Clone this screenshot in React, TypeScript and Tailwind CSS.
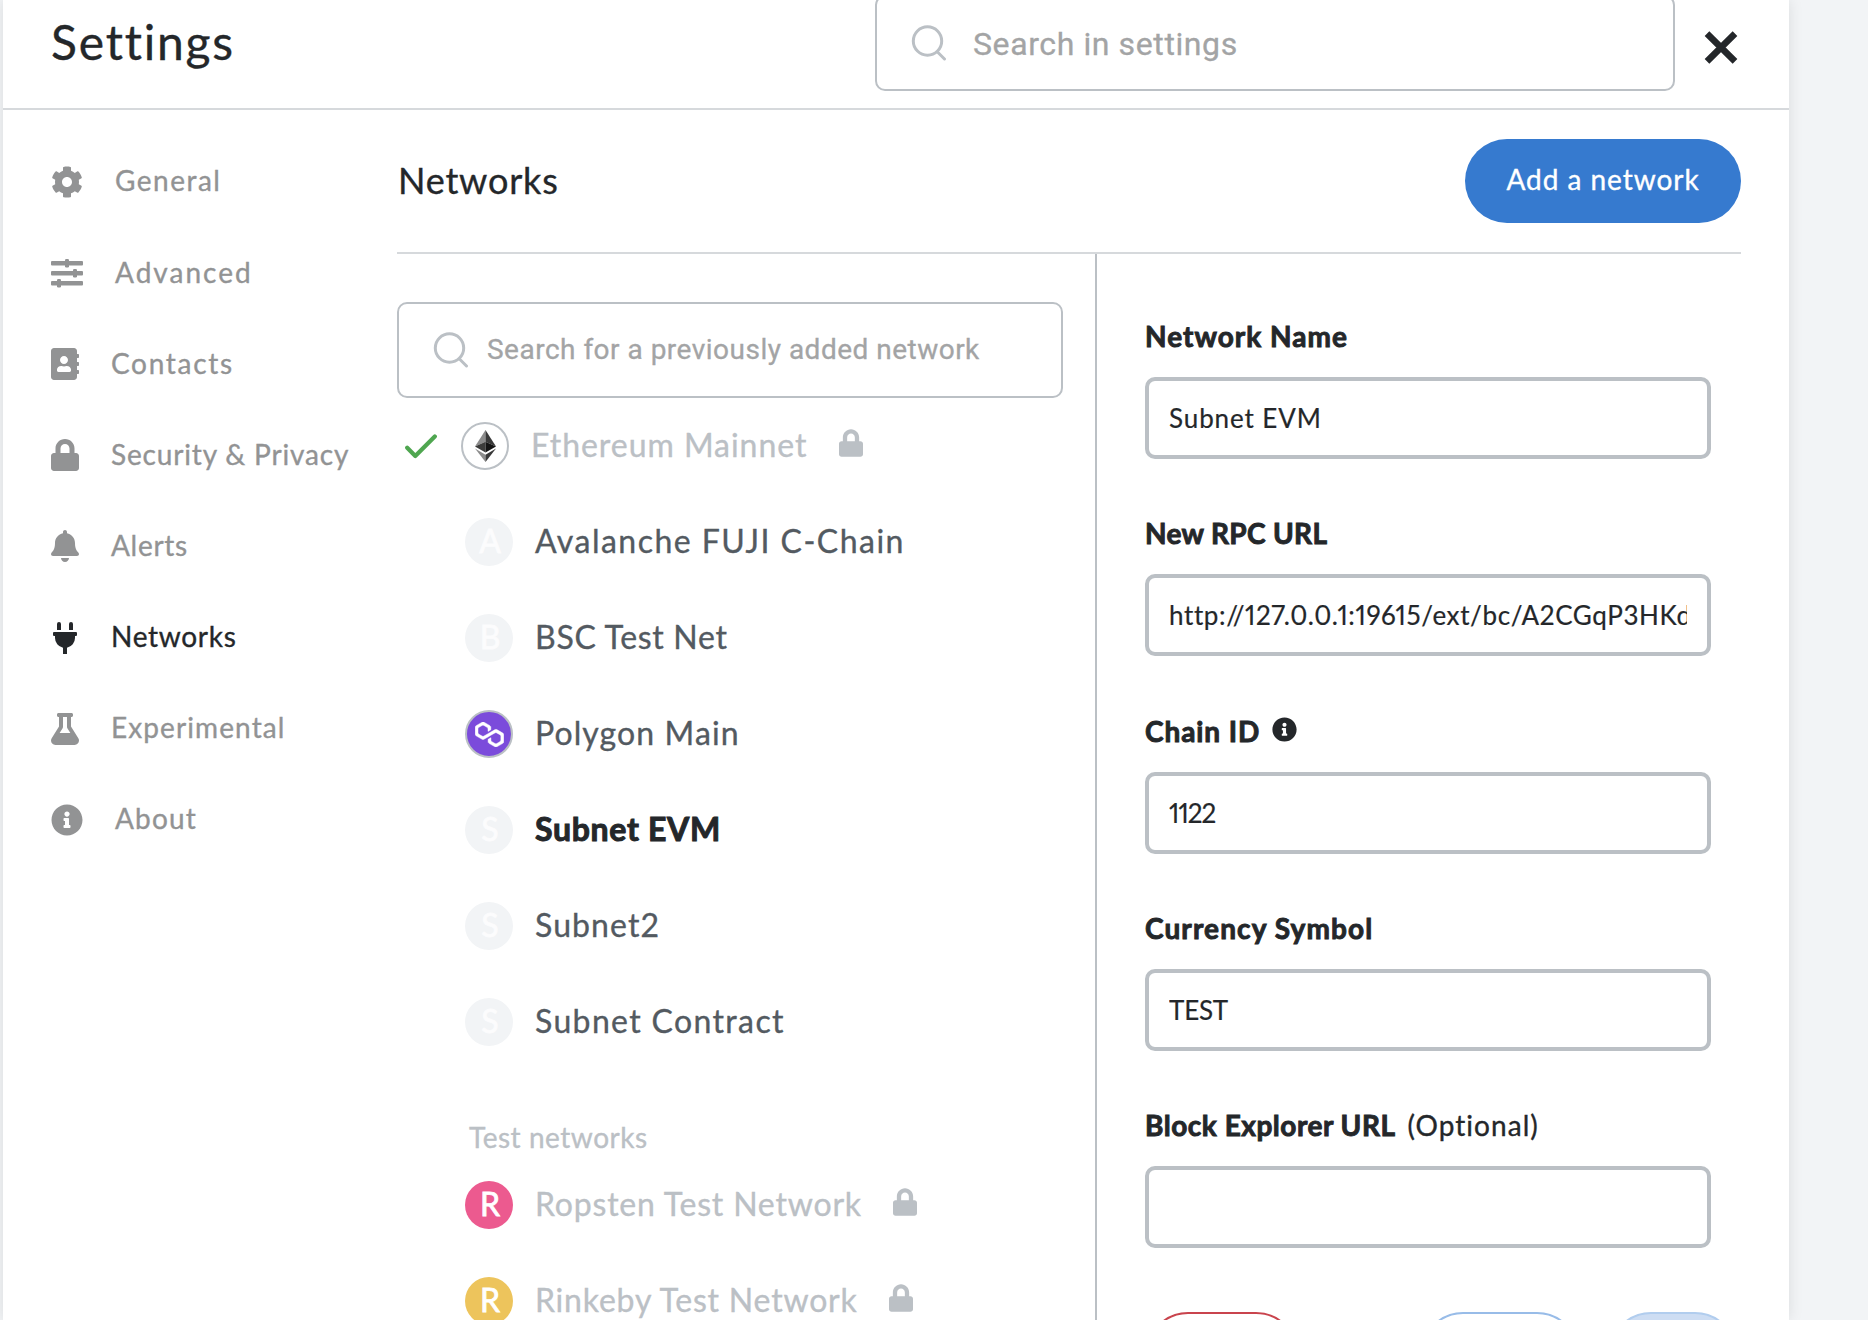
import type { ReactNode } from "react";
import { FaAddressBook, FaBell, FaCog, FaFlask, FaInfoCircle, FaLock, FaPlug } from "react-icons/fa";

function SearchIcon() {
  return (
    <svg className="h-9 w-9 shrink-0" viewBox="0 0 36 36" fill="none" stroke="#bbc0c5" strokeWidth="3">
      <circle cx="16.5" cy="16" r="14.2" />
      <path d="M26.5 27 L33.5 34" strokeLinecap="round" />
    </svg>
  );
}

function SlidersIcon() {
  return (
    <svg className="h-8 w-8" viewBox="0 0 32 32" fill="currentColor">
      <rect y="4" width="32" height="4.4" rx="1" />
      <rect y="14" width="32" height="4.4" rx="1" />
      <rect y="24" width="32" height="4.4" rx="1" />
      <rect x="14" y="2" width="4" height="8.4" rx="1.2" />
      <rect x="22" y="12" width="4" height="8.4" rx="1.2" />
      <rect x="6" y="22" width="4" height="8.4" rx="1.2" />
    </svg>
  );
}

function EthereumIcon() {
  return (
    <svg className="h-8 w-[21px]" viewBox="0 0 21 32">
      <path fill="#8c8c8c" d="M10.5 0 L0 16.5 L10.5 11.8Z" />
      <path fill="#393939" d="M10.5 0 L21 16.5 L10.5 11.8Z" />
      <path fill="#3c3c3b" d="M0 16.5 L10.5 11.8 V22.6Z" />
      <path fill="#141414" d="M21 16.5 L10.5 11.8 V22.6Z" />
      <path fill="#8c8c8c" d="M0 18.6 L10.5 24.7 V32Z" />
      <path fill="#393939" d="M21 18.6 L10.5 24.7 V32Z" />
    </svg>
  );
}

function PolygonIcon() {
  return (
    <svg className="h-[25px] w-[29px]" viewBox="0 0 38.4 33.5" fill="#fff" stroke="#fff" strokeWidth="0.6">
      <path d="M29,10.2c-0.7-0.4-1.6-0.4-2.4,0L21,13.5l-3.8,2.1l-5.5,3.3c-0.7,0.4-1.6,0.4-2.4,0L5,16.3c-0.7-0.4-1.2-1.2-1.2-2.1v-5c0-0.8,0.4-1.6,1.2-2.1l4.3-2.5c0.7-0.4,1.6-0.4,2.4,0L16,7.2c0.7,0.4,1.2,1.2,1.2,2.1v3.3l3.8-2.2V7c0-0.8-0.4-1.6-1.2-2.1l-8-4.7c-0.7-0.4-1.6-0.4-2.4,0L1.2,5C0.4,5.4,0,6.2,0,7v9.4c0,0.8,0.4,1.6,1.2,2.1l8.1,4.7c0.7,0.4,1.6,0.4,2.4,0l5.5-3.2l3.8-2.2l5.5-3.2c0.7-0.4,1.6-0.4,2.4,0l4.3,2.5c0.7,0.4,1.2,1.2,1.2,2.1v5c0,0.8-0.4,1.6-1.2,2.1L29,28.8c-0.7,0.4-1.6,0.4-2.4,0l-4.3-2.5c-0.7-0.4-1.2-1.2-1.2-2.1V21l-3.8,2.2v3.3c0,0.8,0.4,1.6,1.2,2.1l8.1,4.7c0.7,0.4,1.6,0.4,2.4,0l8.1-4.7c0.7-0.4,1.2-1.2,1.2-2.1V17c0-0.8-0.4-1.6-1.2-2.1L29,10.2z" />
    </svg>
  );
}

const tabs: { label: string; icon: ReactNode; tracking: string; active?: boolean }[] = [
  { label: "General", icon: <FaCog className="h-8 w-8" />, tracking: "tracking-[1.5px]" },
  { label: "Advanced", icon: <SlidersIcon />, tracking: "tracking-[2px]" },
  { label: "Contacts", icon: <FaAddressBook className="h-8 w-7" />, tracking: "tracking-[1.7px]" },
  { label: "Security & Privacy", icon: <FaLock className="h-8 w-7" />, tracking: "tracking-[0.84px]" },
  { label: "Alerts", icon: <FaBell className="h-8 w-7" />, tracking: "tracking-[0.7px]" },
  { label: "Networks", icon: <FaPlug className="h-8 w-7" />, tracking: "tracking-[0.7px]", active: true },
  { label: "Experimental", icon: <FaFlask className="h-8 w-7" />, tracking: "tracking-[1.1px]" },
  { label: "About", icon: <FaInfoCircle className="h-8 w-8" />, tracking: "tracking-[1.2px]" },
];

function NetworkRow({
  name,
  avatar,
  tracking,
  color = "text-[#535a61]",
  locked,
}: {
  name: string;
  avatar: ReactNode;
  tracking: string;
  color?: string;
  locked?: boolean;
}) {
  return (
    <div className="flex h-24 items-center pl-[68px]">
      {avatar}
      <span className={`pb-[2px] pl-[22px] text-[32px] leading-10 whitespace-nowrap ${tracking} ${color}`}>{name}</span>
      {locked && <FaLock className="mb-[7px] ml-[31px] h-7 w-6 text-[#bbc0c5]" />}
    </div>
  );
}

function Letter({ children, tone = "bg-[#f2f4f6] text-[#fcfcfd]" }: { children: string; tone?: string }) {
  return (
    <span
      className={`flex size-12 shrink-0 items-center justify-center rounded-full pb-[3px] pl-[2px] text-[32px] leading-none [-webkit-text-stroke:0.8px] ${tone}`}
    >
      {children}
    </span>
  );
}

function Field({
  label,
  value,
  tracking,
  inputTracking = "",
  extra,
}: {
  label: string;
  value: string;
  tracking: string;
  inputTracking?: string;
  extra?: ReactNode;
}) {
  return (
    <label className="mb-[57.25px] block">
      <span className="mb-6 flex h-[34px] items-center text-[28px] leading-[34px] whitespace-nowrap">
        <span className={`font-bold [-webkit-text-stroke:0.9px] ${tracking}`}>{label}</span>
        {extra}
      </span>
      <input
        className={`block h-[82px] w-[566px] rounded-[10px] border-4 border-[#bbc0c5] bg-white px-5 text-[26px] proportional-nums [-webkit-text-stroke:0.2px] ${inputTracking}`}
        defaultValue={value}
      />
    </label>
  );
}

export default function App() {
  return (
    <div className="h-[1320px] w-[1868px] overflow-hidden bg-[#f2f4f6] pl-[3px] font-['Lato','Liberation_Sans',sans-serif] text-[#24272a] [-webkit-text-stroke:0.35px]">
      <div className="flex h-full w-[1786px] flex-col bg-white shadow-[0_0_14px_rgba(0,0,0,0.1)]">
        <header className="flex h-[110px] shrink-0 border-b-2 border-[#d6d9dc] pr-[51px] pl-12">
          <h1 className="h-[82px] text-[48px] leading-[84px] tracking-[1.8px]">Settings</h1>
          <div className="-mt-[5px] ml-auto flex h-24 w-[800px] items-center rounded-[10px] border-2 border-[#bbc0c5] pl-[34px] font-['Roboto',sans-serif] [-webkit-text-stroke:0.3px]">
            <SearchIcon />
            <span className="pt-px pl-[26px] text-[32px] tracking-[0.6px] text-[#a3a4a5]">Search in settings</span>
          </div>
          <svg className="mt-[31px] ml-[29px] h-[33px] w-[34px]" viewBox="0 0 34 33" fill="none" stroke="#24272a" strokeWidth="6.6">
            <path d="M3 2.6 L31 30.4 M31 2.6 L3 30.4" />
          </svg>
        </header>

        <div className="flex min-h-0 flex-1">
          <nav className="w-[394px] shrink-0 pt-[26.4px] pl-12">
            {tabs.map((t) => (
              <div
                key={t.label}
                className={`flex h-[91.14px] items-center gap-8 ${t.active ? "text-[#24272a]" : "text-[#929394]"}`}
              >
                {t.icon}
                <span className={`pb-[3px] text-[28px] whitespace-nowrap ${t.tracking}`}>{t.label}</span>
              </div>
            ))}
          </nav>

          <main className="flex w-[1344px] flex-col">
            <div className="flex h-[144px] shrink-0 items-center justify-between border-b-2 border-[#d6d9dc]">
              <h2 className="pb-[2px] pl-px text-[36px] tracking-[0.8px]">Networks</h2>
              <button className="h-[84px] w-[276px] rounded-full bg-[#367acf] pb-1 text-[28px] tracking-[0.96px] text-white">
                Add a network
              </button>
            </div>

            <div className="flex min-h-0 flex-1">
              <section className="w-[700px] shrink-0 overflow-hidden border-r-2 border-[#bbc0c5] pt-12">
                <div className="flex h-24 w-[666px] items-center rounded-[10px] border-2 border-[#bbc0c5] pl-[34px] font-['Roboto',sans-serif] [-webkit-text-stroke:0.3px]">
                  <SearchIcon />
                  <span className="pl-[18px] text-[28px] tracking-[0.49px] whitespace-nowrap text-[#a3a4a5]">
                    Search for a previously added network
                  </span>
                </div>

                <div className="flex h-24 items-center pl-2">
                  <svg className="h-[25px] w-8" viewBox="0 0 32 25" fill="none" stroke="#4fa650" strokeWidth="4.2" strokeLinecap="round" strokeLinejoin="round">
                    <path d="M2.2 13.8 L10.3 22 L29.8 2.5" />
                  </svg>
                  <span className="ml-6 flex size-12 items-center justify-center rounded-full border-2 border-[#bbc0c5]">
                    <EthereumIcon />
                  </span>
                  <span className="pb-[2px] pl-[22px] text-[32px] leading-10 tracking-[0.96px] text-[#bbc0c5]">Ethereum Mainnet</span>
                  <FaLock className="mb-[7px] ml-[32px] h-7 w-6 text-[#bbc0c5]" />
                </div>
                <NetworkRow name="Avalanche FUJI C-Chain" tracking="tracking-[1.48px]" avatar={<Letter>A</Letter>} />
                <NetworkRow name="BSC Test Net" tracking="tracking-[0.7px]" avatar={<Letter>B</Letter>} />
                <NetworkRow
                  name="Polygon Main"
                  tracking="tracking-[1.1px]"
                  avatar={
                    <span className="flex size-12 shrink-0 items-center justify-center rounded-full border-2 border-[#bbc0c5] bg-[#7b4bdb]">
                      <PolygonIcon />
                    </span>
                  }
                />
                <NetworkRow
                  name="Subnet EVM"
                  tracking="tracking-[0.69px]"
                  color="font-bold text-[#24272a] [-webkit-text-stroke:1px]"
                  avatar={<Letter>S</Letter>}
                />
                <NetworkRow name="Subnet2" tracking="tracking-[1.1px]" avatar={<Letter>S</Letter>} />
                <NetworkRow name="Subnet Contract" tracking="tracking-[1.36px]" avatar={<Letter>S</Letter>} />

                <p className="mt-[50px] -mb-[1px] h-[38px] pl-[72px] text-[28px] leading-[34px] tracking-[0.53px] text-[#bbc0c5]">
                  Test networks
                </p>
                <NetworkRow
                  name="Ropsten Test Network"
                  tracking="tracking-[0.8px]"
                  color="text-[#bbc0c5]"
                  locked
                  avatar={<Letter tone="bg-[#ec5a8f] text-white">R</Letter>}
                />
                <NetworkRow
                  name="Rinkeby Test Network"
                  tracking="tracking-[0.8px]"
                  color="text-[#bbc0c5]"
                  locked
                  avatar={<Letter tone="bg-[#edc45c] text-white">R</Letter>}
                />
              </section>

              <form className="w-[644px] overflow-hidden pt-[65px] pl-12">
                <Field label="Network Name" value="Subnet EVM" tracking="tracking-[1.02px]" inputTracking="tracking-[0.9px]" />
                <Field
                  label="New RPC URL"
                  value="http://127.0.0.1:19615/ext/bc/A2CGqP3HKd"
                  tracking="tracking-[0.34px]"
                  inputTracking="tracking-[0.62px]"
                />
                <Field
                  label="Chain ID"
                  value="1122"
                  tracking="tracking-[0.92px]"
                  inputTracking="tracking-[-0.9px]"
                  extra={<FaInfoCircle className="mb-[3px] ml-3 size-[25px]" />}
                />
                <Field label="Currency Symbol" value="TEST" tracking="tracking-[1.12px]" inputTracking="tracking-[-0.2px]" />
                <Field
                  label="Block Explorer URL"
                  value=""
                  tracking="tracking-[0.52px]"
                  extra={<span className="ml-3 tracking-[1.05px]">(Optional)</span>}
                />
                <div className="flex w-[594px] pt-[7px]">
                  <div className="ml-px h-[84px] w-[152px] rounded-full border-2 border-[#c9444d]" />
                  <div className="ml-[123px] h-[84px] w-[158px] rounded-full border-2 border-[#98bce8]" />
                  <div className="ml-[30px] h-[84px] w-[128px] rounded-full border-2 border-[#b1cdee] bg-[#cdddf3]" />
                </div>
              </form>
            </div>
          </main>
        </div>
      </div>
    </div>
  );
}
